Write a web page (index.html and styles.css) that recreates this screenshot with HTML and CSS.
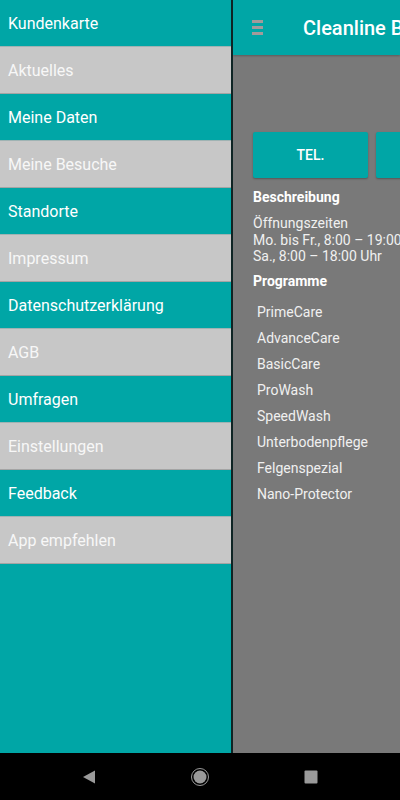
FILE: index.html
```html
<!DOCTYPE html>
<html lang="de">

<head>
    <title>Cleanline</title>
    <meta charset="UTF-8">
    <meta name="viewport" content="width=device-width, initial-scale=1">
    <link rel="stylesheet" href="styles.css">
</head>

<body>
    <div class="screen">
        <nav class="drawer">
            <a class="item">Kundenkarte</a>
            <a class="item alt">Aktuelles</a>
            <a class="item">Meine Daten</a>
            <a class="item alt">Meine Besuche</a>
            <a class="item">Standorte</a>
            <a class="item alt">Impressum</a>
            <a class="item">Datenschutzerklärung</a>
            <a class="item alt">AGB</a>
            <a class="item">Umfragen</a>
            <a class="item alt">Einstellungen</a>
            <a class="item">Feedback</a>
            <a class="item alt">App empfehlen</a>
        </nav>
        <main class="main">
            <header class="toolbar">
                <span class="burger"><i></i><i></i><i></i></span>
                <h1>Cleanline Bremen</h1>
            </header>
            <section class="content">
                <div class="actions">
                    <button type="button" class="action">TEL.</button>
                    <button type="button" class="action">ROUTE</button>
                </div>
                <h2>Beschreibung</h2>
                <p class="desc">Öffnungszeiten<br>Mo. bis Fr., 8:00 – 19:00 Uhr<br>Sa., 8:00 – 18:00 Uhr</p>
                <h2 class="next">Programme</h2>
                <ul class="programs">
                    <li>PrimeCare</li>
                    <li>AdvanceCare</li>
                    <li>BasicCare</li>
                    <li>ProWash</li>
                    <li>SpeedWash</li>
                    <li>Unterbodenpflege</li>
                    <li>Felgenspezial</li>
                    <li>Nano-Protector</li>
                </ul>
            </section>
        </main>
    </div>
    <footer class="navbar">
        <svg width="14" height="14" viewBox="0 0 14 14"><path d="M1 7 L13 0.5 L13 13.5 Z" fill="#9a9a9a"/></svg>
        <svg width="20" height="20" viewBox="0 0 20 20"><circle cx="10" cy="10" r="8.5" fill="none" stroke="#9a9a9a" stroke-width="1"/><circle cx="10" cy="10" r="6.5" fill="#9a9a9a"/></svg>
        <svg width="14" height="14" viewBox="0 0 14 14"><rect x="0.5" y="0.5" width="13" height="13" rx="1" fill="#9a9a9a"/></svg>
    </footer>
</body>

</html>
```

FILE: styles.css
```css
html {
    height: 100%;
}

body {
    margin: 0;
    height: 100%;
    display: flex;
    flex-direction: column;
    font-family: Roboto, "Noto Sans", sans-serif;
    background-color: #000;
    overflow: hidden;
}

.screen {
    display: flex;
    height: 753px;
}

.drawer {
    width: 231px;
    flex: none;
    background-color: #00a6a6;
    border-right: 2px solid #0e2424;
    display: flex;
    flex-direction: column;
}

.item {
    display: flex;
    align-items: center;
    height: 46px;
    padding-left: 8px;
    border-bottom: 1px solid #9fb3b3;
    color: #fff;
    font-size: 16px;
}

.item.alt {
    background-color: #c7c7c7;
    color: #f7f7f7;
    border-bottom-color: #a4a4a4;
}

.main {
    flex: 1;
    min-width: 0;
    background-color: #797979;
    overflow: hidden;
}

.toolbar {
    height: 55px;
    background-color: #00a6a6;
    display: flex;
    align-items: center;
    box-shadow: 0 1px 2px rgba(0, 0, 0, .25);
}

.burger {
    flex: none;
    display: flex;
    flex-direction: column;
    gap: 3px;
    margin-left: 19px;
    width: 11px;
}

.burger i {
    height: 3px;
    background-color: #a39a9a;
}

.toolbar h1 {
    margin: 0 0 0 40px;
    font-size: 20px;
    font-weight: 500;
    color: #fff;
    white-space: nowrap;
}

.content {
    padding: 77px 0 0 20px;
    color: #f0f0f0;
    font-size: 14px;
}

.actions {
    display: flex;
    gap: 8px;
}

.action {
    flex: none;
    width: 115px;
    height: 46px;
    border: none;
    border-radius: 2px;
    background-color: #00a6a6;
    color: #fff;
    font-family: inherit;
    font-size: 14px;
    font-weight: 500;
    box-shadow: 0 1px 2px rgba(0, 0, 0, .3);
}

.content h2 {
    margin: 11px 0 0;
    font-size: 14px;
    font-weight: 700;
    line-height: 16px;
    color: #fff;
}

.content h2.next {
    margin-top: 8px;
}

.desc {
    margin: 10px 0 0;
    line-height: 16.5px;
    white-space: nowrap;
}

.programs {
    list-style: none;
    margin: 10px 0 0;
    padding: 0 0 0 4px;
}

.programs li {
    line-height: 26px;
}

.navbar {
    flex: 1;
    display: flex;
    align-items: center;
    gap: 94px;
    padding-left: 82px;
}
```
